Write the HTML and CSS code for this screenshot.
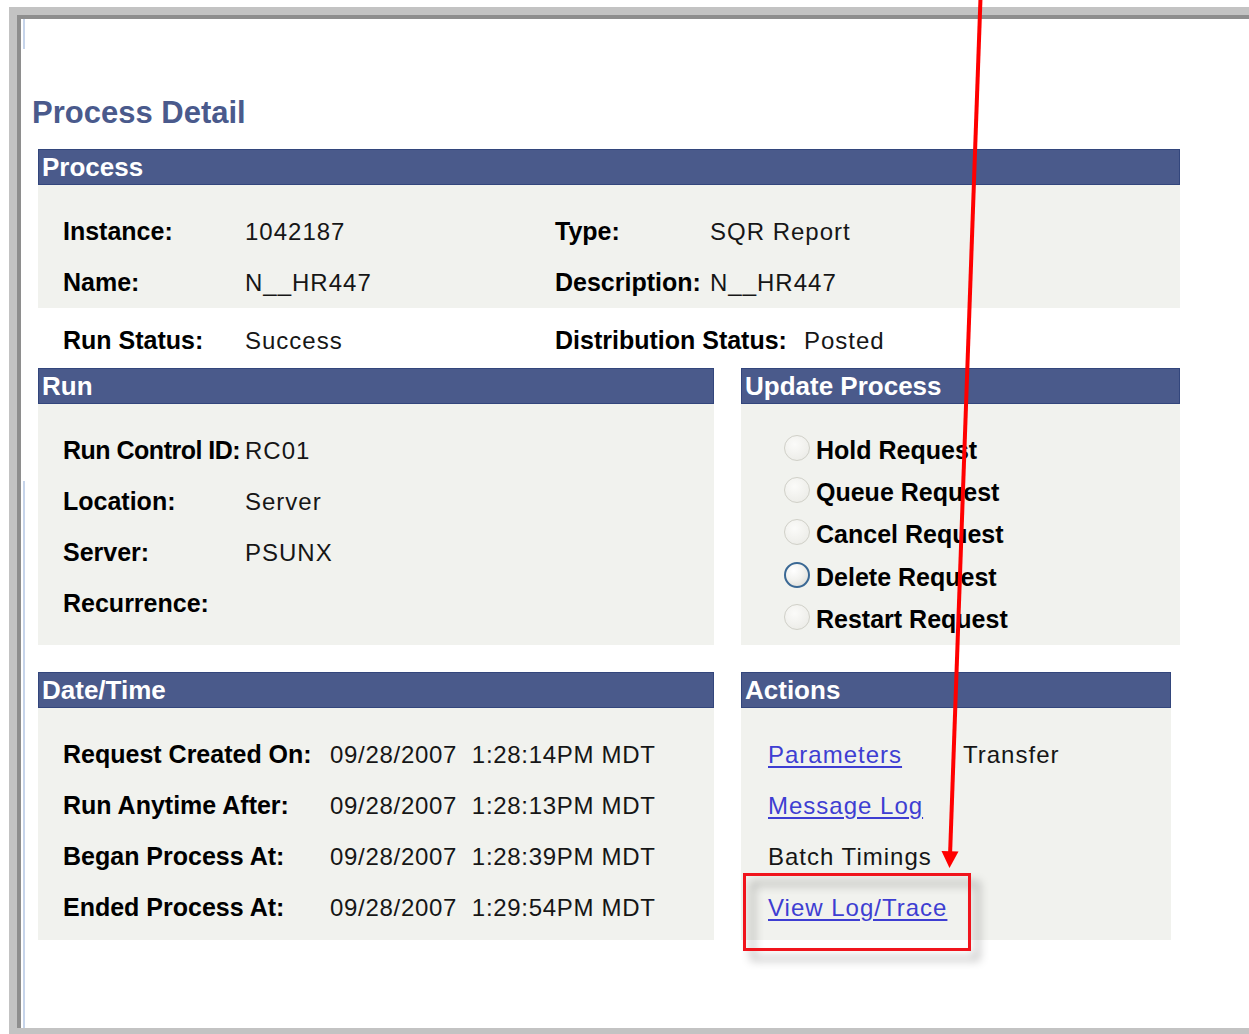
FILE: index.html
```html
<!DOCTYPE html>
<html lang="en">
<head>
<meta charset="utf-8">
<title>Process Detail</title>
<link rel="stylesheet" href="styles.css">
</head>
<body>
<div class="frame">
  <div class="screen">
    <main class="page">
      <h1 class="title">Process Detail</h1>

      <section class="panel">
        <h2 class="bar">Process</h2>
        <div class="body body-process">
          <div class="row">
            <span class="lbl c1">Instance:</span><span class="val c2">1042187</span>
            <span class="lbl c3">Type:</span><span class="val">SQR Report</span>
          </div>
          <div class="row">
            <span class="lbl c1">Name:</span><span class="val c2">N__HR447</span>
            <span class="lbl c3">Description:</span><span class="val">N__HR447</span>
          </div>
        </div>
      </section>

      <div class="row status-row">
        <span class="lbl c1">Run Status:</span><span class="val c2">Success</span>
        <span class="lbl c4">Distribution Status:</span><span class="val">Posted</span>
      </div>

      <div class="cols">
        <section class="panel wide">
          <h2 class="bar">Run</h2>
          <div class="body body-run">
            <div class="row"><span class="lbl c1 tight">Run Control ID:</span><span class="val">RC01</span></div>
            <div class="row"><span class="lbl c1">Location:</span><span class="val">Server</span></div>
            <div class="row"><span class="lbl c1">Server:</span><span class="val">PSUNX</span></div>
            <div class="row"><span class="lbl c1">Recurrence:</span></div>
          </div>
        </section>
        <section class="panel narrow">
          <h2 class="bar">Update Process</h2>
          <div class="body body-update">
            <label class="radio-row"><span class="radio"></span><span class="lbl">Hold Request</span></label>
            <label class="radio-row"><span class="radio"></span><span class="lbl">Queue Request</span></label>
            <label class="radio-row"><span class="radio"></span><span class="lbl">Cancel Request</span></label>
            <label class="radio-row"><span class="radio radio-focus"></span><span class="lbl">Delete Request</span></label>
            <label class="radio-row"><span class="radio"></span><span class="lbl">Restart Request</span></label>
          </div>
        </section>
      </div>

      <div class="cols cols-lower">
        <section class="panel wide">
          <h2 class="bar">Date/Time</h2>
          <div class="body body-dt">
            <div class="row"><span class="lbl c5">Request Created On:</span><span class="val stamp">09/28/2007&nbsp;&nbsp;1:28:14PM MDT</span></div>
            <div class="row"><span class="lbl c5">Run Anytime After:</span><span class="val stamp">09/28/2007&nbsp;&nbsp;1:28:13PM MDT</span></div>
            <div class="row"><span class="lbl c5">Began Process At:</span><span class="val stamp">09/28/2007&nbsp;&nbsp;1:28:39PM MDT</span></div>
            <div class="row"><span class="lbl c5">Ended Process At:</span><span class="val stamp">09/28/2007&nbsp;&nbsp;1:29:54PM MDT</span></div>
          </div>
        </section>
        <section class="panel actions">
          <h2 class="bar">Actions</h2>
          <div class="body body-actions">
            <div class="row"><a class="link c6" href="#">Parameters</a><span class="val">Transfer</span></div>
            <div class="row"><a class="link" href="#">Message Log</a></div>
            <div class="row"><span class="val">Batch Timings</span></div>
            <div class="row"><a class="link" href="#">View Log/Trace</a></div>
          </div>
        </section>
      </div>
    </main>
  </div>
</div>

<!-- callout: red frame around the log link and the pointer arrow -->
<div class="callout-box"></div>
<svg class="callout-arrow" width="1249" height="1034" viewBox="0 0 1249 1034" aria-hidden="true">
  <line x1="980.5" y1="-2" x2="950" y2="856" stroke="#ff0000" stroke-width="4"/>
  <polygon points="941.5,851 958.5,851.5 949.5,868" fill="#ff0000"/>
</svg>
</body>
</html>
```

FILE: styles.css
```css
* {
  box-sizing: border-box;
}

html, body {
  margin: 0;
  padding: 0;
  background: #ffffff;
}

body {
  position: relative;
  width: 1249px;
  height: 1034px;
  overflow: hidden;
  font-family: "Liberation Sans", Arial, sans-serif;
  color: #000;
}

/* window chrome: light grey rim with darker inner edge */
.frame {
  margin: 7px 0 0 9px;
  border-top: 8px solid #c3c3c3;
  border-left: 8px solid #c3c3c3;
  border-bottom: 6px solid #c3c3c3;
  height: 1027px;
}

.screen {
  height: 100%;
  border-top: 4px solid #8e8e8e;
  border-left: 4px solid #8e8e8e;
  background:
    linear-gradient(#c6d4ea, #c6d4ea) no-repeat 2px 0 / 2px 30px,
    linear-gradient(#c6d4ea, #c6d4ea) no-repeat 2px 462px / 2px 100%,
    #ffffff;
}

.page {
  padding-left: 17px;
  width: 1159px;
}

.title {
  margin: 0 0 18px -6px;
  padding-top: 76px;
  font-size: 31px;
  line-height: 36px;
  font-weight: bold;
  color: #4a5a8c;
}

/* section panels */
.panel {
  display: flex;
  flex-direction: column;
}

.bar {
  margin: 0;
  height: 36px;
  padding-left: 3px;
  border: 1px solid #33467c;
  background: #4a5a8b;
  color: #ffffff;
  font-size: 26px;
  line-height: 34px;
  font-weight: bold;
  white-space: nowrap;
}

.body {
  flex: 1 0 auto;
  background: #f1f2ee;
}

.row {
  display: flex;
  align-items: baseline;
  height: 51px;
  line-height: 51px;
  white-space: nowrap;
}

.lbl {
  font-size: 25px;
  font-weight: bold;
  color: #000;
}

.tight {
  letter-spacing: -0.5px;
}

.val {
  font-size: 24px;
  letter-spacing: 1px;
  color: #161616;
}

.stamp {
  letter-spacing: 0.7px;
}

.c1 { width: 182px; }
.c2 { width: 310px; }
.c3 { width: 155px; }
.c4 { width: 249px; }
.c5 { width: 267px; }
.c6 { width: 195px; }

.body-process {
  height: 123px;
  padding: 21px 0 0 25px;
}

.status-row {
  margin-top: 7px;
  padding-left: 25px;
}

.cols {
  display: flex;
  gap: 27px;
  margin-top: 2px;
}

.cols-lower {
  margin-top: 27px;
}

.wide { width: 676px; }
.narrow { width: 439px; }
.actions { width: 430px; }

.body-run {
  height: 241px;
  padding: 21px 0 0 25px;
}

.body-update {
  padding: 24.5px 0 0 43px;
}

.radio-row {
  display: flex;
  align-items: center;
  height: 42.4px;
  line-height: 42px;
  white-space: nowrap;
}

.radio {
  width: 26px;
  height: 26px;
  margin: 0 6px 4px 0;
  border-radius: 50%;
  border: 1.5px solid #d0d0c8;
  background: radial-gradient(circle at 40% 35%, #fbfbf9 0%, #eeeeea 70%, #e4e4de 100%);
  flex: none;
}

.radio-focus {
  border: 2px solid #3a6894;
  background: radial-gradient(circle at 35% 30%, #ffffff 0%, #f2f2ef 45%, #d8d8d2 100%);
}

.body-dt {
  height: 232px;
  padding: 21px 0 0 25px;
}

.body-actions {
  padding: 21px 0 0 27px;
}

.link {
  font-size: 24px;
  letter-spacing: 1px;
  color: #3e3ed2;
  text-decoration: underline;
  text-underline-offset: 3px;
}

/* red call-out drawn over the page */
.callout-box {
  position: absolute;
  left: 743px;
  top: 873px;
  width: 228px;
  height: 78px;
  border: 3px solid #f0141c;
  filter: drop-shadow(8px 9px 5px rgba(0, 0, 0, 0.38));
}

.callout-arrow {
  position: absolute;
  left: 0;
  top: 0;
  pointer-events: none;
}
```
